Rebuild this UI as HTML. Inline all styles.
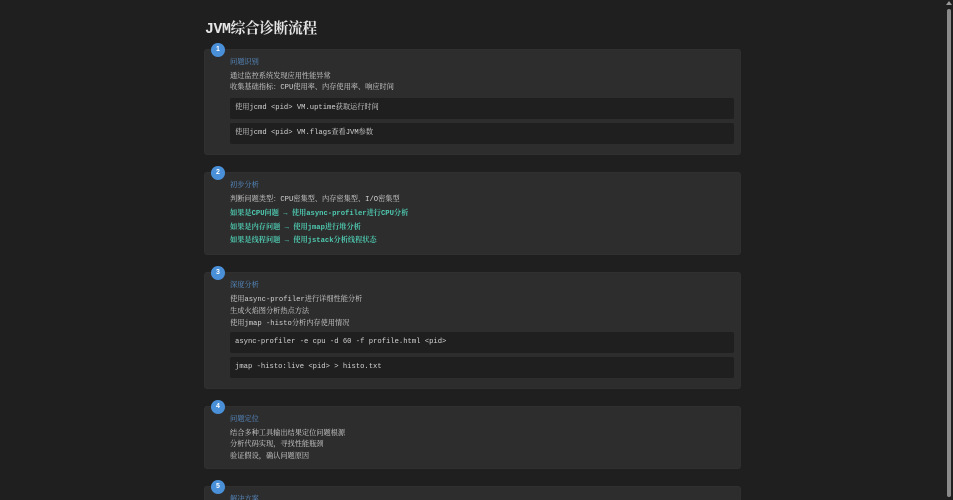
<!DOCTYPE html>
<html><head><meta charset="utf-8"><style>
*{margin:0;padding:0;box-sizing:border-box}
html,body{width:953px;height:500px;overflow:hidden;background:#1f1f1f}
body{position:relative;font-family:"Liberation Mono","Noto Serif CJK SC",monospace;font-size:7.2px;color:#d4d4d4}
h1{position:absolute;left:205px;top:17px;font-size:14.8px;font-weight:bold;color:#e6e6e6;font-family:"Liberation Mono","Noto Serif CJK SC",monospace;letter-spacing:-0.4px}
.card{position:absolute;left:204px;width:537px;background:#2d2d2d;border-radius:3px;border:1px solid #303030}
.num{position:absolute;left:6px;top:-7px;width:14px;height:14px;border-radius:50%;background:#4a90d9;color:#fff;font-size:7px;font-weight:bold;text-align:center;line-height:14px;font-family:"Liberation Sans",sans-serif}
.t{position:absolute;left:25px;color:#5a93cf}
.l{position:absolute;left:25px;white-space:nowrap}
.g{color:#4ec9b0;font-weight:bold}
.code{position:absolute;left:25px;width:504px;height:21px;background:#1f1f1f;border-radius:2px;line-height:21px;padding-left:5px;white-space:nowrap}
.sb{position:absolute;right:0;top:0;width:8px;height:500px;background:#1f1f1f}
.sb div{position:absolute;left:2px;top:9px;width:4px;height:488px;background:#8a8a8a;border-radius:2px}
.sb span{position:absolute;left:1px;top:1px;width:0;height:0;border-left:3px solid transparent;border-right:3px solid transparent;border-bottom:4px solid #9a9a9a}
</style></head><body>
<h1>JVM综合诊断流程</h1>

<div class="card" style="top:49px;height:106px">
<div class="num">1</div>
<div class="t" style="top:7px">问题识别</div>
<div class="l" style="top:21px">通过监控系统发现应用性能异常</div>
<div class="l" style="top:32px">收集基础指标：CPU使用率、内存使用率、响应时间</div>
<div class="code" style="top:48px">使用jcmd &lt;pid&gt; VM.uptime获取运行时间</div>
<div class="code" style="top:73px">使用jcmd &lt;pid&gt; VM.flags查看JVM参数</div>
</div>

<div class="card" style="top:172px;height:83px">
<div class="num">2</div>
<div class="t" style="top:7px">初步分析</div>
<div class="l" style="top:21px">判断问题类型：CPU密集型、内存密集型、I/O密集型</div>
<div class="l g" style="top:35px">如果是CPU问题 → 使用async-profiler进行CPU分析</div>
<div class="l g" style="top:49px">如果是内存问题 → 使用jmap进行堆分析</div>
<div class="l g" style="top:62px">如果是线程问题 → 使用jstack分析线程状态</div>
</div>

<div class="card" style="top:272px;height:117px">
<div class="num">3</div>
<div class="t" style="top:7px">深度分析</div>
<div class="l" style="top:21px">使用async-profiler进行详细性能分析</div>
<div class="l" style="top:33px">生成火焰图分析热点方法</div>
<div class="l" style="top:45px">使用jmap -histo分析内存使用情况</div>
<div class="code" style="top:59px">async-profiler -e cpu -d 60 -f profile.html &lt;pid&gt;</div>
<div class="code" style="top:84px">jmap -histo:live &lt;pid&gt; &gt; histo.txt</div>
</div>

<div class="card" style="top:406px;height:63px">
<div class="num">4</div>
<div class="t" style="top:7px">问题定位</div>
<div class="l" style="top:21px">结合多种工具输出结果定位问题根源</div>
<div class="l" style="top:32px">分析代码实现，寻找性能瓶颈</div>
<div class="l" style="top:44px">验证假设，确认问题原因</div>
</div>

<div class="card" style="top:486px;height:14px;border-bottom:none;border-radius:3px 3px 0 0">
<div class="num">5</div>
<div class="t" style="top:7px">解决方案</div>
</div>

<div class="sb"><span></span><div></div></div>
</body></html>
